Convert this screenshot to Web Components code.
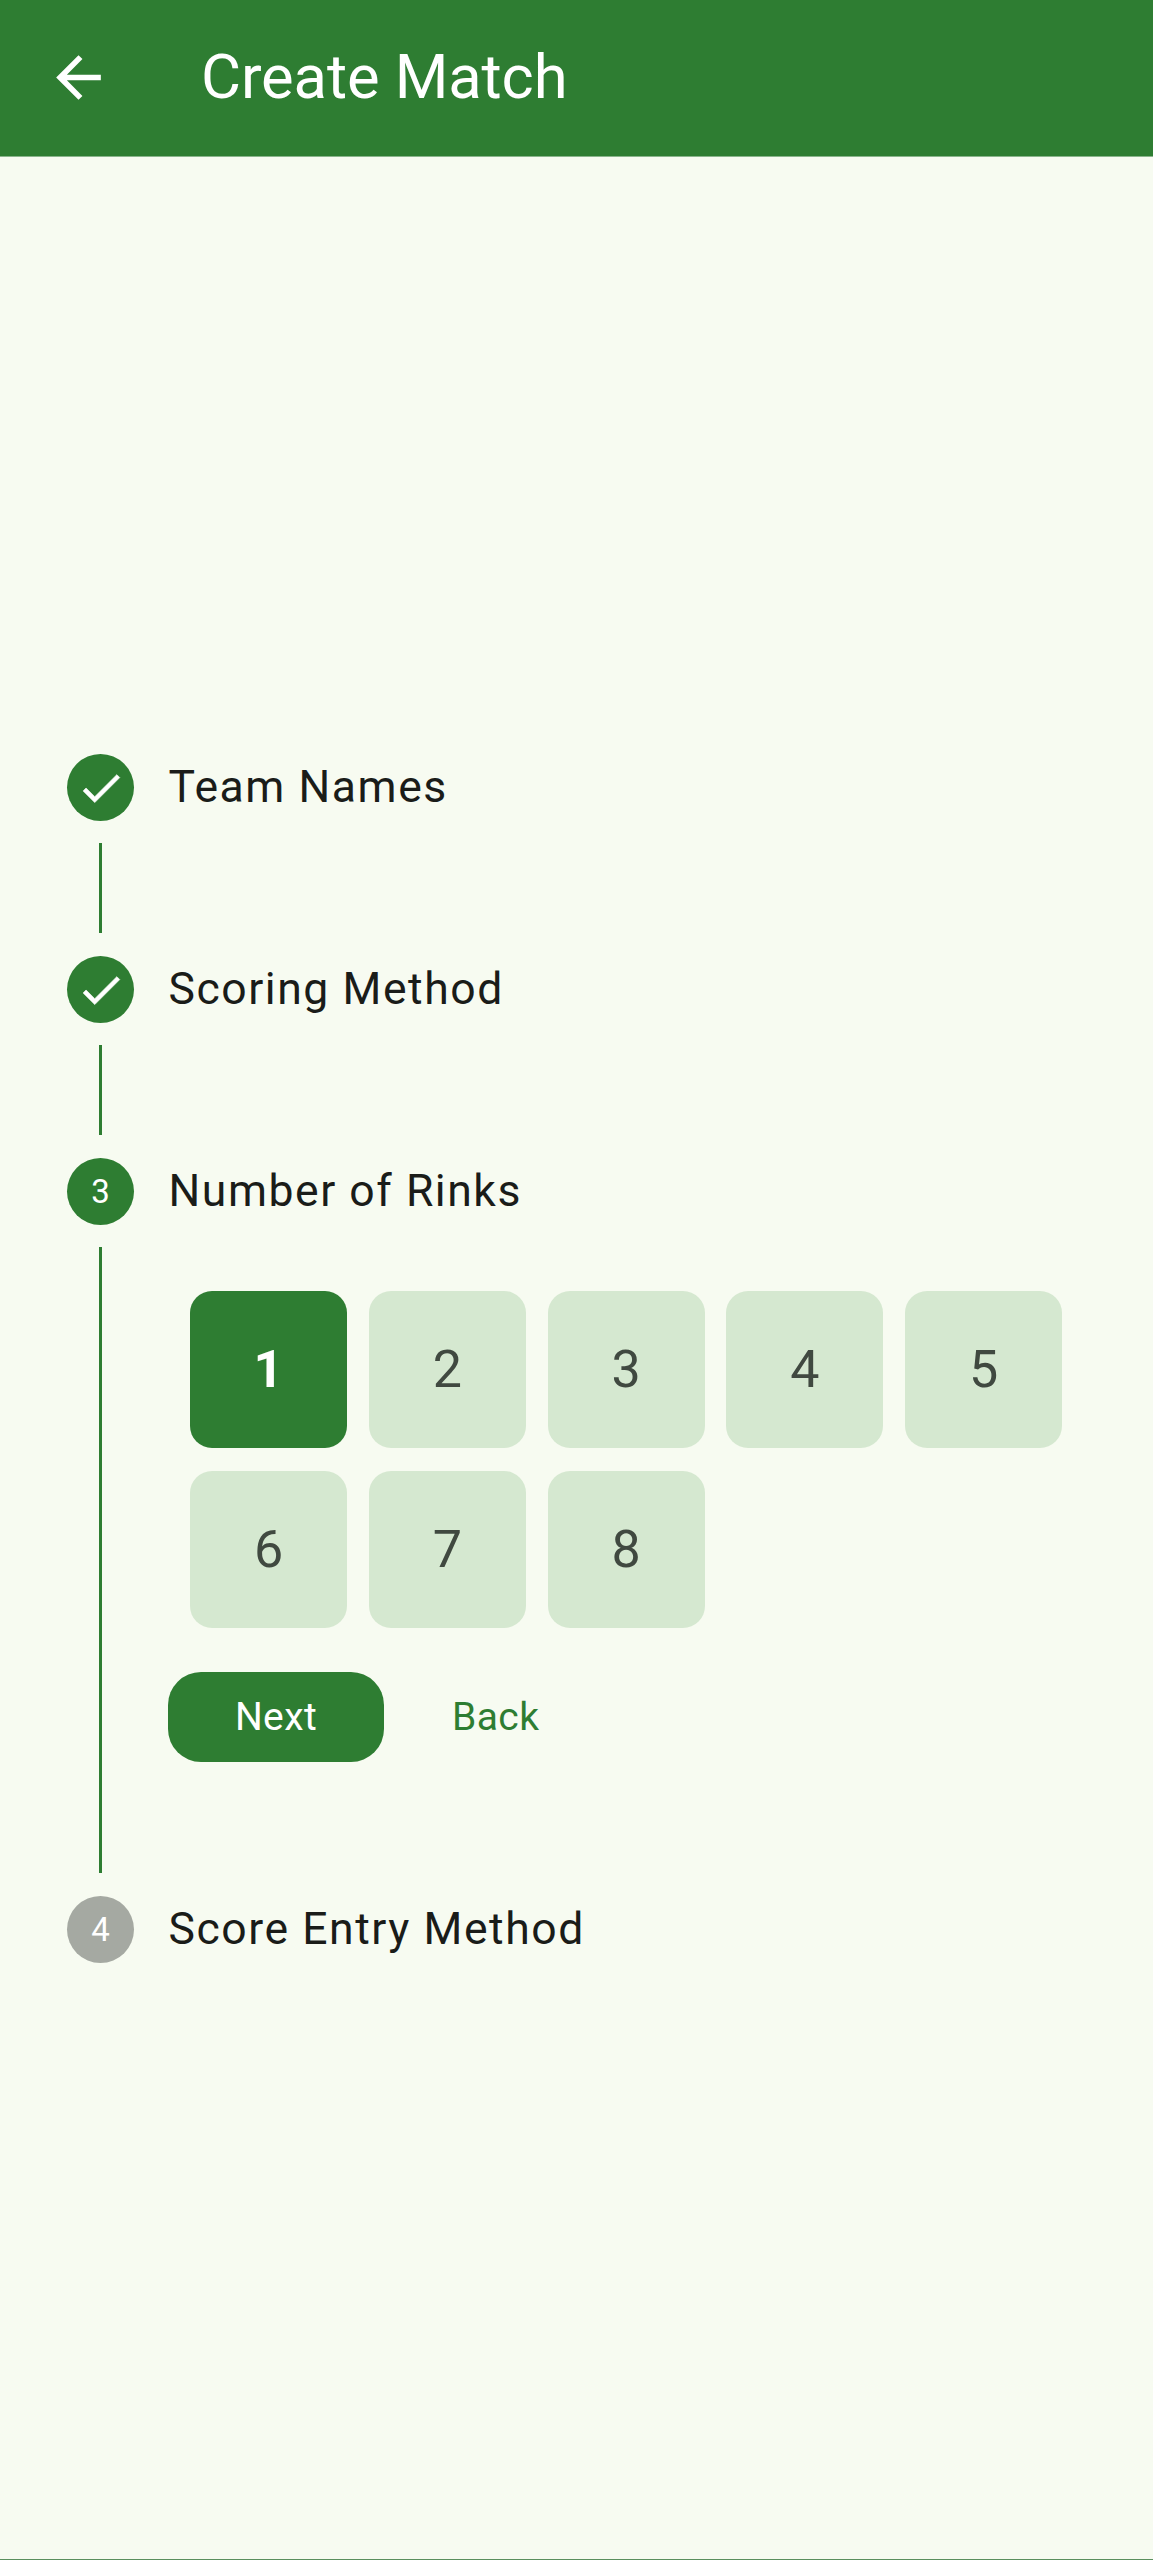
<!DOCTYPE html>
<html lang="en">
<head>
<meta charset="utf-8">
<title>Create Match</title>
<style>
    html, body { margin: 0; height: 100%; }
    body {
        display: flex;
        flex-direction: column;
        height: 2560px;
        background: #f7fbf1;
        font-family: Roboto, "Liberation Sans", sans-serif;
        overflow: hidden;
    }
    .bottom-edge { height: 1px; background: #5b8f5f; flex: none; }
</style>
</head>
<body>
<app-bar title="Create Match"></app-bar>
<match-stepper>
    <stepper-step state="done" number="1" label="Team Names"></stepper-step>
    <stepper-step state="done" number="2" label="Scoring Method"></stepper-step>
    <stepper-step state="active" number="3" label="Number of Rinks">
        <rink-picker selected="1" count="8"></rink-picker>
        <step-actions></step-actions>
    </stepper-step>
    <stepper-step state="todo" number="4" label="Score Entry Method" last></stepper-step>
</match-stepper>
<div class="bottom-edge"></div>

<script>
class AppBar extends HTMLElement {
    constructor() {
        super();
        this.attachShadow({ mode: 'open' });
    }

    connectedCallback() {
        this.shadowRoot.innerHTML = `
            <style>
                :host {
                    display: flex;
                    flex: none;
                    align-items: center;
                    height: 157px;
                    padding: 0 0 1px 45px;
                    background: #2e7d32;
                    border-bottom: 1px solid #8ab58c;
                    color: #fff;
                    box-sizing: border-box;
                }
                svg { width: 67px; height: 67px; fill: currentColor; flex: none; }
                h1 {
                    margin: -2px 0 0 89px;
                    font: 400 61.5px Roboto, sans-serif;
                    letter-spacing: -0.1px;
                }
            </style>
            <svg viewBox="0 0 24 24"><path d="M20 11H7.83l5.59-5.59L12 4l-8 8 8 8 1.41-1.41L7.83 13H20v-2z"/></svg>
            <h1>${this.getAttribute('title')}</h1>
        `;
    }
}

class MatchStepper extends HTMLElement {
    constructor() {
        super();
        this.attachShadow({ mode: 'open' }).innerHTML = `
            <style>
                :host {
                    display: flex;
                    flex: 1;
                    flex-direction: column;
                    justify-content: center;
                    padding-top: 1px;
                }
            </style>
            <slot></slot>
        `;
    }
}

class StepperStep extends HTMLElement {
    constructor() {
        super();
        this.attachShadow({ mode: 'open' });
    }

    connectedCallback() {
        const state = this.getAttribute('state');
        const badge = state === 'done'
            ? '<svg viewBox="0 0 24 24"><path d="M9 16.17L4.83 12l-1.42 1.41L9 19 21 7l-1.41-1.41z"/></svg>'
            : this.getAttribute('number');
        const connector = this.hasAttribute('last') ? '' : `
            <div class="connector">
                <div class="line"></div>
                <div class="content"><slot></slot></div>
            </div>`;

        this.shadowRoot.innerHTML = `
            <style>
                :host { display: block; }
                .header {
                    display: flex;
                    align-items: center;
                    height: 67px;
                    padding-left: 67px;
                }
                .badge {
                    display: flex;
                    align-items: center;
                    justify-content: center;
                    flex: none;
                    width: 67px;
                    height: 67px;
                    border-radius: 50%;
                    background: #2e7d32;
                    color: #fff;
                    font-size: 33px;
                }
                :host([state="todo"]) .badge { background: #a5a9a2; }
                .badge svg {
                    width: 50px;
                    height: 50px;
                    fill: #fff;
                    stroke: #fff;
                    stroke-width: 0.3;
                }
                .label {
                    margin: -1px 0 0 34.5px;
                    font-size: 44.5px;
                    letter-spacing: 1.55px;
                    color: #1a1c19;
                }
                .connector {
                    display: flex;
                    margin: 22px 0 23px;
                    min-height: 90px;
                }
                .line {
                    flex: none;
                    width: 3px;
                    margin-left: 99px;
                    background: #2e7d32;
                }
                .content { margin-left: 66px; }
            </style>
            <div class="header">
                <div class="badge">${badge}</div>
                <div class="label">${this.getAttribute('label')}</div>
            </div>
            ${connector}
        `;
    }
}

class RinkPicker extends HTMLElement {
    constructor() {
        super();
        this.attachShadow({ mode: 'open' });
    }

    connectedCallback() {
        const selected = parseInt(this.getAttribute('selected'), 10);
        const count = parseInt(this.getAttribute('count'), 10);
        let tiles = '';
        for (let i = 1; i <= count; i++) {
            tiles += `<div class="tile${i === selected ? ' selected' : ''}">${i}</div>`;
        }

        this.shadowRoot.innerHTML = `
            <style>
                :host {
                    display: grid;
                    grid-template-columns: repeat(5, 157px);
                    gap: 22.5px 21.8px;
                    padding: 44px 0 0.5px 22px;
                }
                .tile {
                    display: flex;
                    align-items: center;
                    justify-content: center;
                    height: 157px;
                    border-radius: 22px;
                    background: #d5e8d0;
                    color: #404940;
                    font-size: 52px;
                }
                .selected {
                    background: #2e7d32;
                    color: #fff;
                    font-weight: 700;
                }
            </style>
            ${tiles}
        `;
    }
}

class StepActions extends HTMLElement {
    constructor() {
        super();
        this.attachShadow({ mode: 'open' }).innerHTML = `
            <style>
                :host {
                    display: flex;
                    align-items: center;
                    padding: 44px 0 111px;
                    font-size: 39px;
                    letter-spacing: 0.4px;
                }
                div {
                    display: flex;
                    align-items: center;
                    justify-content: center;
                    height: 90px;
                }
                .next {
                    width: 216px;
                    border-radius: 33px;
                    background: #2e7d32;
                    color: #fff;
                }
                .back {
                    margin-left: 35px;
                    padding: 0 33px;
                    color: #2e7d32;
                }
            </style>
            <div class="next">Next</div>
            <div class="back">Back</div>
        `;
    }
}

customElements.define('app-bar', AppBar);
customElements.define('match-stepper', MatchStepper);
customElements.define('stepper-step', StepperStep);
customElements.define('rink-picker', RinkPicker);
customElements.define('step-actions', StepActions);
</script>
</body>
</html>
